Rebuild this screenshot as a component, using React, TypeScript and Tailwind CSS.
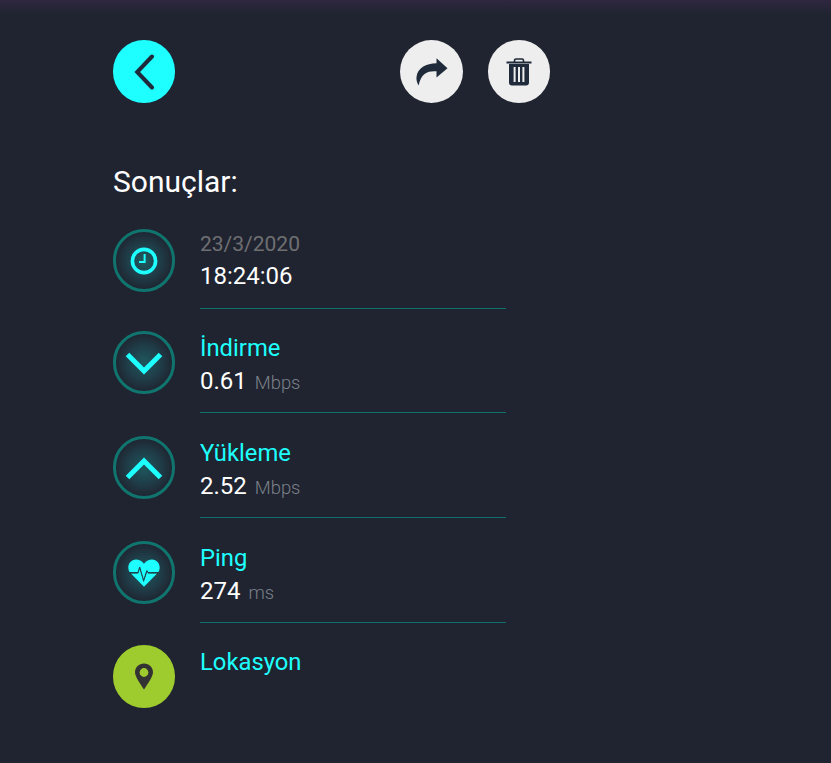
import React from "react";

const INK = "#1f2a3a";
const CYAN = "#1effff";

function RingIcon({ children }: { children: React.ReactNode }) {
  return (
    <div className="flex h-[63px] w-[62px] shrink-0 items-center justify-center rounded-full border-[3px] border-[#10756f] bg-[radial-gradient(circle,#1f585f_0%,#1f3d48_42%,#1f2430_75%)]">
      {children}
    </div>
  );
}

function Row({
  icon,
  label,
  value,
  unit,
  className = "",
}: {
  icon: React.ReactNode;
  label: string;
  value: string;
  unit: string;
  className?: string;
}) {
  return (
    <div className={`flex gap-[25px] ${className}`}>
      {icon}
      <div className="w-[306px]">
        <div className="h-[82px] border-b border-[#0f716f] pt-[1px]">
          <div className="text-[23.8px] leading-[32px] text-[#1effff]">{label}</div>
          <div className="flex items-baseline leading-[34px]">
            <span className="text-[24px] text-white">{value}</span>
            <span className="ml-[8px] text-[18.4px] font-light text-[#7b8088]">{unit}</span>
          </div>
        </div>
      </div>
    </div>
  );
}

function Chevron({ up }: { up?: boolean }) {
  return (
    <svg className={up ? "mt-[2px]" : "mt-[1px]"} width="38" height="24" viewBox="0 0 38 24" fill="none">
      <path d={up ? "M2.5 20.5 L19 4 L35.5 20.5" : "M2.5 3.5 L19 20 L35.5 3.5"} stroke={CYAN} strokeWidth="5" />
    </svg>
  );
}

export default function App() {
  return (
    <div
      className="h-[763px] w-[831px] bg-[linear-gradient(#2f2640_0px,#1f2430_14px)] pl-[113px] pt-[40px] text-white"
      style={{ fontFamily: "Roboto, sans-serif" }}
    >
      <div className="flex h-[63px] w-[437px] items-start">
        <div className="flex h-[63px] w-[62px] items-center justify-center rounded-full bg-[#1effff]">
          <svg width="22" height="36" viewBox="0 0 22 36" fill="none">
            <path d="M19 2.5 L4.2 18 L19 33.5" stroke={INK} strokeWidth="4" strokeLinecap="round" />
          </svg>
        </div>
        <div className="ml-auto flex gap-[25px]">
          <div className="flex h-[63px] w-[63px] items-center justify-center rounded-full bg-[#eeeeee]">
            <svg width="32" height="28" viewBox="0 0 32 28">
              <path
                fill={INK}
                d="M20.5 0.3 L31.5 10.2 L20.5 19.5 L20.5 13.3 C12 12.8 5.5 14.5 2.6 27.5 C0.8 24.5 0.2 21.5 0.5 19 C1.5 10 10 5.2 20.5 5.2 Z"
              />
            </svg>
          </div>
          <div className="flex h-[63px] w-[62px] items-center justify-center rounded-full bg-[#eeeeee]">
            <svg width="26" height="28" viewBox="0 0 26 28">
              <path fill="none" stroke={INK} strokeWidth="1.6" d="M8.5 4 V2.6 Q8.5 1 10 1 H16 Q17.5 1 17.5 2.6 V4" />
              <rect x="0.5" y="3.5" width="25" height="2" fill={INK} />
              <path
                fill={INK}
                fillRule="evenodd"
                d="M3 6 H23 V24.5 Q23 27.5 20 27.5 H6 Q3 27.5 3 24.5 Z M7.6 9 V24 H9.6 V9 Z M12 9 V24 H14 V9 Z M16.4 9 V24 H18.4 V9 Z"
              />
            </svg>
          </div>
        </div>
      </div>

      <h1 className="mt-[61px] text-[30px] font-normal leading-[36px] text-white">Sonuçlar:</h1>

      <div className="mt-[29px]">
        <div className="flex gap-[25px]">
          <RingIcon>
            <svg width="30" height="30" viewBox="0 0 30 30" fill="none">
              <circle cx="15" cy="15" r="11.6" stroke={CYAN} strokeWidth="3.6" />
              <path d="M15.6 8 V16 H10" stroke={CYAN} strokeWidth="2" />
            </svg>
          </RingIcon>
          <div className="w-[306px]">
            <div className="h-[80px] border-b border-[#0f716f] pt-[1px]">
              <div className="text-[21px] leading-[28px] text-[#6f6f72]">23/3/2020</div>
              <div className="text-[24px] leading-[37px] text-white">18:24:06</div>
            </div>
          </div>
        </div>

        <Row className="mt-[22px]" icon={<RingIcon><Chevron /></RingIcon>} label="İndirme" value="0.61" unit="Mbps" />
        <Row className="mt-[23px]" icon={<RingIcon><Chevron up /></RingIcon>} label="Yükleme" value="2.52" unit="Mbps" />
        <Row
          className="mt-[23px]"
          icon={
            <RingIcon>
              <svg width="32" height="28" viewBox="0 0 34 30">
                <path
                  fill={CYAN}
                  d="M17 5 C14.5 1.5 11.5 0.5 8.5 0.5 C3.5 0.5 0.2 4.5 0.2 9 C0.2 11 0.8 12.5 1.5 14 H10.5 L12.5 8.5 L16.5 22.5 L20 12 L21.5 14 H32.5 C33.2 12.5 33.8 11 33.8 9 C33.8 4.5 30.5 0.5 25.5 0.5 C22.5 0.5 19.5 1.5 17 5 Z"
                />
                <path fill={CYAN} d="M3 15.5 H10.8 L12.4 11 L16.5 25 L20.4 14 L21.4 15.5 H31 L17 29.8 Z" />
                <path d="M1 14.8 H10.4 L12.4 8.5 L16.6 23 L20 12.5 L21.8 14.8 H33" fill="none" stroke="#1f3f49" strokeWidth="1" />
              </svg>
            </RingIcon>
          }
          label="Ping"
          value="274"
          unit="ms"
        />
        <div className="mt-[22px] flex gap-[25px]">
          <div className="flex h-[63px] w-[62px] shrink-0 items-center justify-center rounded-full bg-[#9ecb2d]">
            <svg width="18" height="27" viewBox="0 0 18 26">
              <path
                fill="#333333"
                fillRule="evenodd"
                d="M9 0 C14 0 18 3.8 18 8.8 C18 13 13 20 9 26 C5 20 0 13 0 8.8 C0 3.8 4 0 9 0 Z M9 4.6 A4.4 4.4 0 1 0 9 13.4 A4.4 4.4 0 1 0 9 4.6 Z"
              />
            </svg>
          </div>
          <div className="pt-[1px] text-[23.8px] leading-[32px] text-[#1effff]">Lokasyon</div>
        </div>
      </div>
    </div>
  );
}
